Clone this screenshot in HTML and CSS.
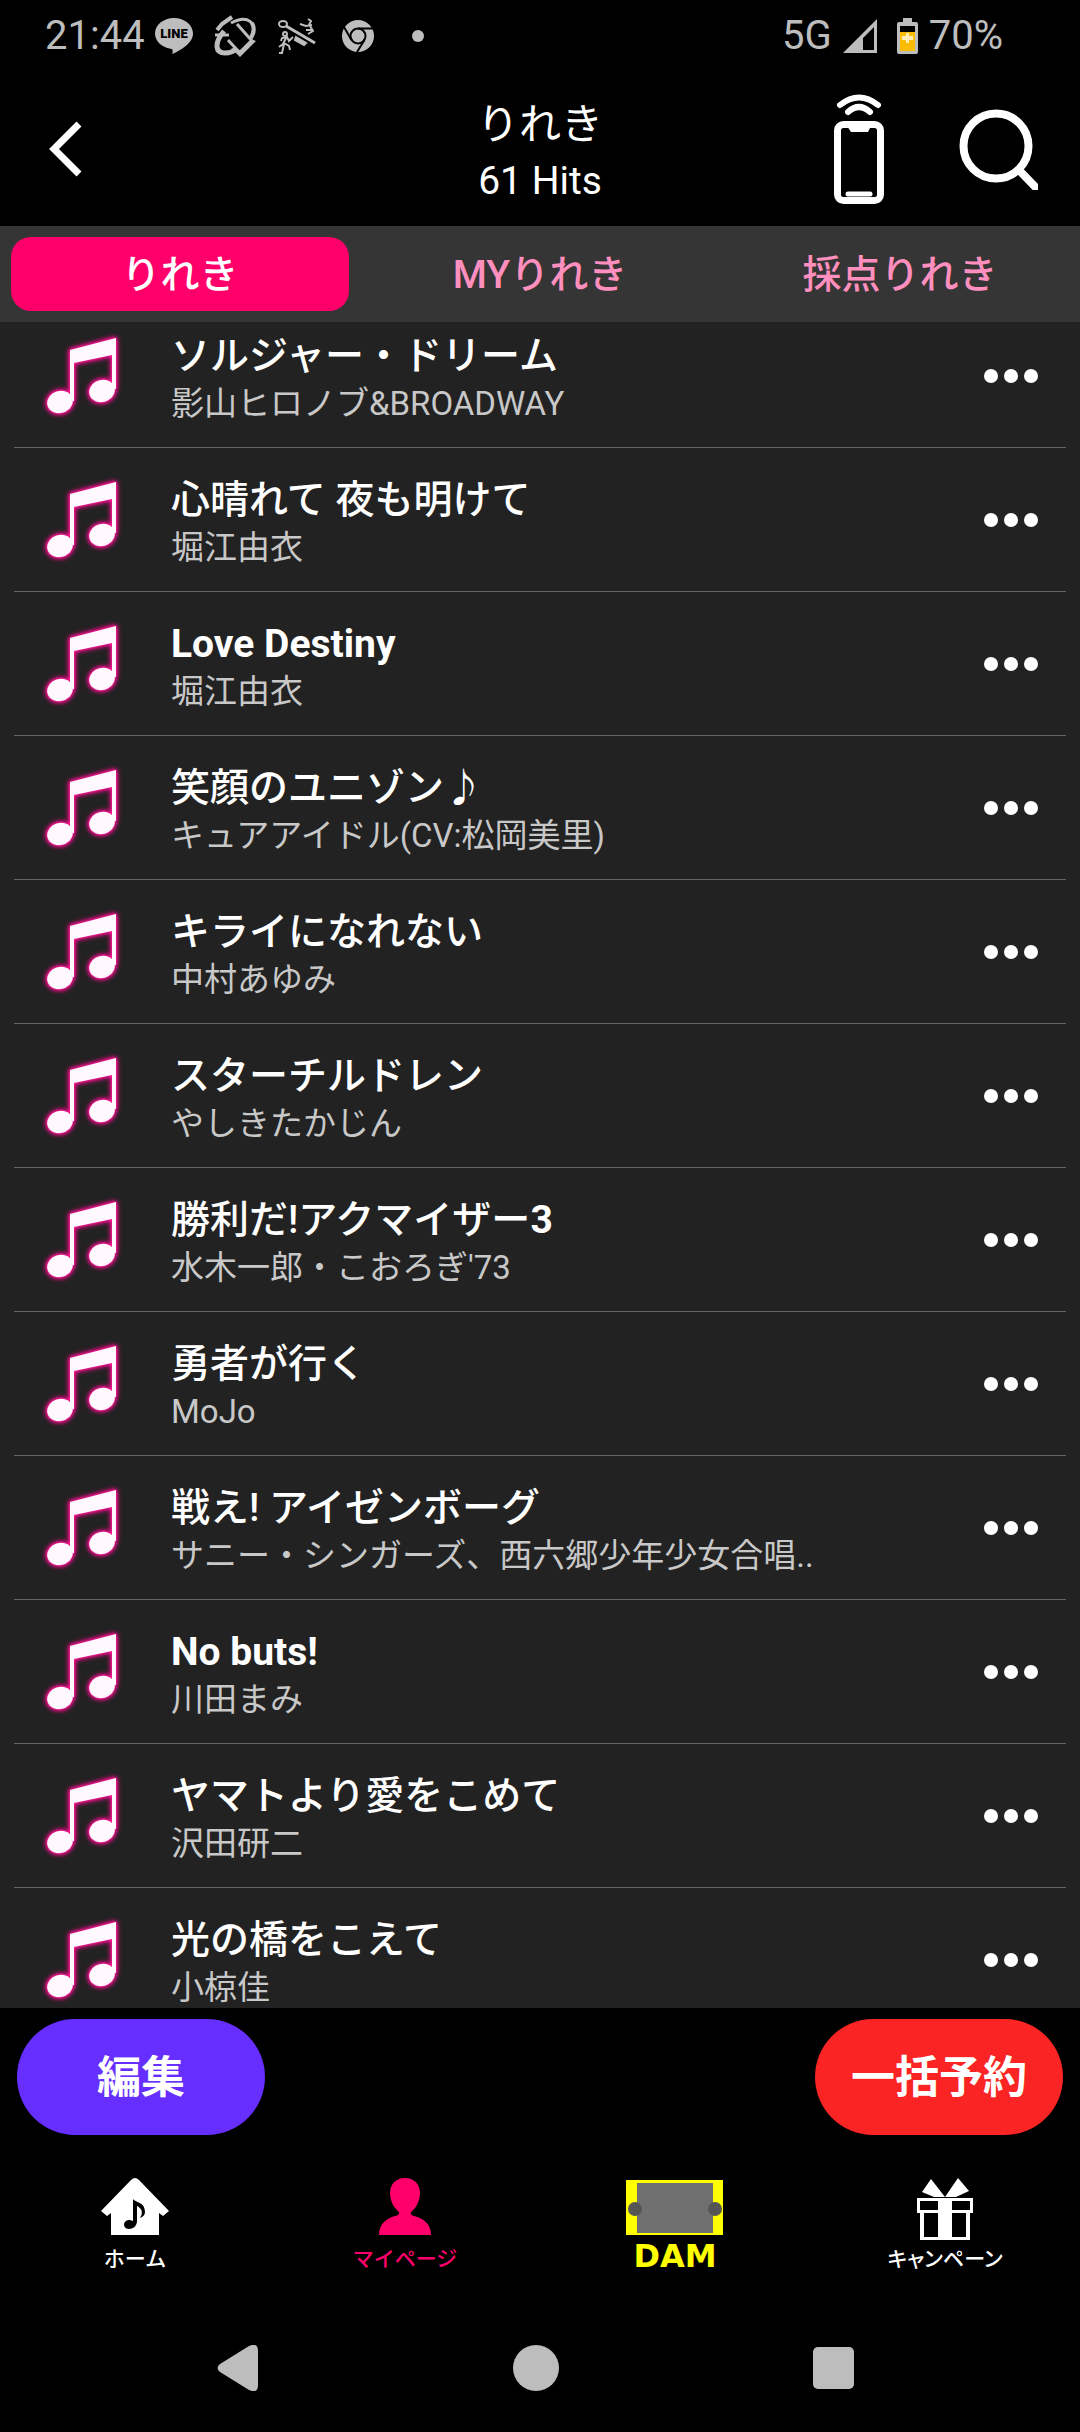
FILE: index.html
```html
<!DOCTYPE html>
<html lang="ja">
<head>
<meta charset="utf-8">
<meta name="viewport" content="width=device-width">
<title>りれき</title>
<link rel="stylesheet" href="styles.css">
</head>
<body>
<svg class="defs" aria-hidden="true">
  <defs>
    <symbol id="note" viewBox="0 0 90 90">
      <g fill="#fff8ff">
        <path d="M32 19 78 7V58H74V24L36 32V70H32Z"/>
        <ellipse cx="22" cy="71" rx="13" ry="11" transform="rotate(-18 22 71)"/>
        <ellipse cx="64" cy="60" rx="13" ry="11" transform="rotate(-18 64 60)"/>
      </g>
    </symbol>
    <symbol id="dots" viewBox="0 0 54 16">
      <g fill="#fff"><circle cx="7" cy="8" r="7"/><circle cx="27" cy="8" r="7"/><circle cx="47" cy="8" r="7"/></g>
    </symbol>
  </defs>
</svg>
<div class="app">
  <div class="status">
    <span class="clock">21:44</span>
    <svg class="st-line" viewBox="0 0 38 36" width="38" height="36"><path fill="#bdbdbd" d="M19 0C8.500 0 0 7 0 15.500 0 23 6.500 29.300 15.500 30.700 18 31.200 18 32 17.300 36 24 33 38 26 38 15.500 38 7 29.500 0 19 0Z"/><text x="19" y="20" text-anchor="middle" class="line-word">LINE</text></svg>
    <svg class="st-t" viewBox="0 0 42 42" width="42" height="42"><g fill="none" stroke="#bdbdbd"><path d="M3 15 8 9 18 2" stroke-width="4"/><path d="M17 8C34-1 44 8 37 22" stroke-width="3"/><path d="M38 8Q42 15 37 23" stroke-width="4"/><path d="M1 20H15" stroke-width="3"/><path d="M10 16C0 28 1 38 11 38 17 38 20 36 22 34" stroke-width="5"/><path d="M23 9 38 26 26 38 14 25" stroke-width="3"/></g><path fill="#bdbdbd" d="M42 26 26 42 17 33 26 35 37 24Z"/></svg>
    <svg class="st-run" viewBox="0 0 38 36" width="38" height="36"><g fill="none" stroke="#bdbdbd" stroke-width="2"><ellipse cx="5" cy="6" rx="4" ry="3"/><path stroke-width="3" d="M8 8 37 25"/><path fill="#bdbdbd" d="M18 19 28 25 26 27 17 22Z"/><circle cx="7" cy="16" r="2"/><path d="M3 23 4 20 9 19 11 23 15 19M8 20 5 26 1 29M6 26 4 35H1M6 25 11 28 12 32M22 6 28 8 34 7M30 1 33 3 31 7M32 8 35 13 30 16M28 12 34 12"/></g></svg>
    <svg class="st-chrome" viewBox="0 0 32 32" width="32" height="32"><circle cx="16" cy="16" r="16" fill="#bdbdbd"/><g fill="none" stroke="#000" stroke-width="2"><circle cx="16" cy="16" r="7.500"/><path d="M16 8.500H31M9.500 20 2 7M22.500 20 15 32"/></g></svg>
    <svg class="st-dot" viewBox="0 0 12 12" width="12" height="12"><circle cx="6" cy="6" r="6" fill="#bdbdbd"/></svg>
    <span class="net">5G</span>
    <svg class="st-signal" viewBox="0 0 34 34" width="34" height="34"><path fill="#bdbdbd" fill-rule="evenodd" d="M34 0V34H0ZM31 8 20 19V31H31Z"/></svg>
    <svg class="st-batt" viewBox="0 0 21 36" width="21" height="36"><path fill="#bdbdbd" d="M6 0H15V4H19Q21 4 21 6V34Q21 36 19 36H2Q0 36 0 34V6Q0 4 2 4H6Z"/><path d="M3 8H18V15H3Z"/><path fill="#fbbc04" d="M3 14H18V33H3Z"/><path fill="#ffeeb8" d="M9 15H12V18H16V22H12V25H9V22H5V18H9Z"/></svg>
    <span>70%</span>
  </div>

  <header class="header">
    <button class="icon-btn back" aria-label="戻る"><svg viewBox="0 0 34 56" width="34" height="56"><path d="M30 3 5 28 30 53" fill="none" stroke="#fff" stroke-width="7"/></svg></button>
    <div class="heading">
      <h1>りれき</h1>
      <p>61 Hits</p>
    </div>
    <div class="actions">
      <button class="icon-btn" aria-label="リモコン"><svg viewBox="0 0 50 110" width="50" height="110"><g fill="none" stroke="#fff" stroke-linecap="round"><rect x="3.500" y="30.500" width="43" height="76" rx="6" stroke-width="7"/><path d="M6 11Q25-4 44 11" stroke-width="6"/><path d="M14 18Q25 8 36 18" stroke-width="6"/><path d="M14 100H36" stroke-width="5"/></g><path fill="#fff" d="M13 32H37L34 38H17Z"/></svg></button>
      <button class="icon-btn" aria-label="検索"><svg viewBox="0 0 79 81" width="79" height="81"><g fill="none" stroke="#fff" stroke-width="8"><circle cx="37" cy="37" r="32.500"/><path d="M59 60 84 86"/></g></svg></button>
    </div>
  </header>

  <nav class="tabs">
    <button class="tab active">りれき</button>
    <button class="tab">MYりれき</button>
    <button class="tab">採点りれき</button>
  </nav>

  <main class="list-view">
    <ul class="songs">
      <li class="song"><svg class="note"><use href="#note"/></svg><div class="info"><h2>ソルジャー・ドリーム</h2><p>影山ヒロノブ&amp;BROADWAY</p></div><button class="icon-btn more" aria-label="メニュー"><svg><use href="#dots"/></svg></button></li>
      <li class="song"><svg class="note"><use href="#note"/></svg><div class="info"><h2>心晴れて 夜も明けて</h2><p>堀江由衣</p></div><button class="icon-btn more" aria-label="メニュー"><svg><use href="#dots"/></svg></button></li>
      <li class="song"><svg class="note"><use href="#note"/></svg><div class="info"><h2 class="latin">Love Destiny</h2><p>堀江由衣</p></div><button class="icon-btn more" aria-label="メニュー"><svg><use href="#dots"/></svg></button></li>
      <li class="song"><svg class="note"><use href="#note"/></svg><div class="info"><h2>笑顔のユニゾン♪</h2><p>キュアアイドル(CV:松岡美里)</p></div><button class="icon-btn more" aria-label="メニュー"><svg><use href="#dots"/></svg></button></li>
      <li class="song"><svg class="note"><use href="#note"/></svg><div class="info"><h2>キライになれない</h2><p>中村あゆみ</p></div><button class="icon-btn more" aria-label="メニュー"><svg><use href="#dots"/></svg></button></li>
      <li class="song"><svg class="note"><use href="#note"/></svg><div class="info"><h2>スターチルドレン</h2><p>やしきたかじん</p></div><button class="icon-btn more" aria-label="メニュー"><svg><use href="#dots"/></svg></button></li>
      <li class="song"><svg class="note"><use href="#note"/></svg><div class="info"><h2>勝利だ!アクマイザー<span class="latin">3</span></h2><p>水木一郎・こおろぎ'73</p></div><button class="icon-btn more" aria-label="メニュー"><svg><use href="#dots"/></svg></button></li>
      <li class="song"><svg class="note"><use href="#note"/></svg><div class="info"><h2>勇者が行く</h2><p>MoJo</p></div><button class="icon-btn more" aria-label="メニュー"><svg><use href="#dots"/></svg></button></li>
      <li class="song"><svg class="note"><use href="#note"/></svg><div class="info"><h2>戦え! アイゼンボーグ</h2><p>サニー・シンガーズ、西六郷少年少女合唱..</p></div><button class="icon-btn more" aria-label="メニュー"><svg><use href="#dots"/></svg></button></li>
      <li class="song"><svg class="note"><use href="#note"/></svg><div class="info"><h2 class="latin">No buts!</h2><p>川田まみ</p></div><button class="icon-btn more" aria-label="メニュー"><svg><use href="#dots"/></svg></button></li>
      <li class="song"><svg class="note"><use href="#note"/></svg><div class="info"><h2>ヤマトより愛をこめて</h2><p>沢田研二</p></div><button class="icon-btn more" aria-label="メニュー"><svg><use href="#dots"/></svg></button></li>
      <li class="song"><svg class="note"><use href="#note"/></svg><div class="info"><h2>光の橋をこえて</h2><p>小椋佳</p></div><button class="icon-btn more" aria-label="メニュー"><svg><use href="#dots"/></svg></button></li>
    </ul>
  </main>

  <div class="bulk">
    <button class="pill edit">編集</button>
    <button class="pill reserve">一括予約</button>
  </div>

  <nav class="bottom">
    <a href="#home"><svg viewBox="0 0 68 62" width="68" height="62"><path fill="#fff" d="M34 0Q36 0 38 2L68 33 62 38 58 35V57H10V35L6 38 0 33 30 2Q32 0 34 0Z"/><path d="M32 21C35 25 44 24 44 34 44 37 42 39 39 40 43 34 40 30 36 28V43C36 48 32 51 28 51 24 51 23 48 23 46 24 42 28 41 32 43Z"/></svg><span>ホーム</span></a>
    <a href="#mypage" class="current"><svg viewBox="0 0 52 62" width="52" height="62"><path fill="#ff006b" d="M26 0C36 0 41 7 41 15 41 22 38 29 32 34Q31 37 35 38C47 41 52 48 52 57H0C0 48 5 41 16 38Q21 37 20 34C14 29 11 22 11 15 11 7 16 0 26 0Z"/></svg><span>マイページ</span></a>
    <a href="#dam" class="dam"><svg viewBox="0 0 98 62" width="98" height="62"><path fill="#ff0" d="M0 2H97V57H0Z"/><path fill="#707070" d="M11 5H87V55H11Z"/><g fill="#555"><circle cx="9" cy="31" r="7"/><circle cx="89" cy="31" r="7"/></g></svg><span>DAM</span></a>
    <a href="#campaign" class="campaign"><svg viewBox="0 0 56 62" width="56" height="62"><g fill="#fff"><path d="M14 1 5 14 17 19H39L52 13 41 0 28 19Z"/><path fill-rule="evenodd" d="M0 20H56V35H53V62H3V35H0ZM3 23V32H21V23ZM35 23V32H53V23ZM7 35V59H21V35ZM35 35V59H49V35Z"/></g></svg><span>キャンペーン</span></a>
  </nav>

  <nav class="system">
    <button class="icon-btn" aria-label="戻る"><svg viewBox="0 0 42 46" width="42" height="46"><path fill="#bdbdbd" d="M32 1Q41-3 41 6V40Q41 49 32 45L3 27Q-2 23 3 19Z"/></svg></button>
    <button class="icon-btn" aria-label="ホーム"><svg viewBox="0 0 46 46" width="46" height="46"><circle cx="23" cy="23" r="23" fill="#bdbdbd"/></svg></button>
    <button class="icon-btn" aria-label="アプリ"><svg viewBox="0 0 42 42" width="42" height="42"><rect width="41" height="42" rx="5" fill="#bdbdbd"/></svg></button>
  </nav>
</div>
</body>
</html>
```
FILE: styles.css
```css
* { box-sizing: border-box; }
body {
  margin: 0;
  background: #000;
  color: #fff;
  font-family: Roboto, "Noto Sans CJK JP", sans-serif;
}
h1, h2, p, ul { margin: 0; padding: 0; font-weight: 400; }
ul { list-style: none; }
svg { display: block; flex: none; }
.defs { position: absolute; width: 0; height: 0; }
.app { display: flex; flex-direction: column; min-height: 100vh; }
.icon-btn { display: block; padding: 0; border: 0; background: none; color: inherit; }

.status {
  display: flex;
  align-items: center;
  height: 72px;
  padding: 0 77px 0 45px;
  font-size: 40px;
  line-height: 72px;
  color: #bdbdbd;
}
.st-line { margin-left: 10px; }
.line-word { font: 900 13px Roboto, sans-serif; fill: #000; }
.st-t { margin-left: 21px; }
.st-run { margin-left: 22px; }
.st-chrome { margin-left: 26px; }
.st-dot { margin-left: 38px; }
.net { margin-left: auto; }
.st-signal { margin: 0 20px 0 11px; }
.st-batt { margin-right: 11px; }

.header {
  display: grid;
  grid-template-columns: 1fr auto 1fr;
  align-items: center;
  height: 154px;
  padding: 0 42px;
}
.back { margin-left: 7px; }
.heading { padding-top: 4px; text-align: center; }
.heading h1 { font-size: 42px; line-height: 60px; }
.heading p { font-size: 39px; line-height: 52px; }
.actions { display: flex; align-items: center; justify-content: flex-end; gap: 75px; }

.tabs {
  display: grid;
  grid-template-columns: repeat(3, 1fr);
  gap: 22px;
  height: 96px;
  padding: 11px;
  background: #353535;
}
.tab {
  padding: 2px 0 0;
  border: 0;
  border-radius: 20px;
  background: none;
  color: #ff8fbe;
  font: 500 39px/72px Roboto, "Noto Sans CJK JP", sans-serif;
}
.tab.active { background: #ff006b; color: #fff; }

.list-view {
  display: flex;
  flex-direction: column;
  justify-content: flex-end;
  flex: 1;
  background: #222;
  overflow: hidden;
}
.songs { margin: -18px 14px -24px; }
.song {
  display: flex;
  align-items: center;
  height: 144px;
  padding: 0 28px 0 24px;
  border-bottom: 1px solid #666;
}
.note { width: 90px; height: 90px; filter: drop-shadow(0 0 1px #ff1a94) drop-shadow(0 0 2px #ff1a94) drop-shadow(0 0 2px #e00080); }
.info { flex: 1; min-width: 0; padding: 9px 0 0 43px; white-space: nowrap; }
.info h2 { font-size: 39px; line-height: 48px; font-weight: 500; }
.info .latin { font-weight: 700; }
.info p { font-size: 33px; line-height: 48px; color: #c8c8c8; }
.more svg { width: 54px; height: 16px; }

.bulk {
  display: flex;
  justify-content: space-between;
  height: 138px;
  padding: 11px 17px;
}
.pill {
  width: 248px;
  height: 116px;
  padding: 2px 0 0;
  border: 0;
  border-radius: 58px;
  color: #fff;
  font: 700 44px/114px Roboto, "Noto Sans CJK JP", sans-serif;
}
.edit { background: #662eff; }
.reserve { background: #fa2424; }

.bottom {
  display: grid;
  grid-template-columns: repeat(4, 1fr);
  height: 158px;
  padding-top: 32px;
}
.bottom a {
  display: flex;
  flex-direction: column;
  align-items: center;
  color: #fff;
  font-size: 21px;
  line-height: 38px;
  font-weight: 500;
  text-decoration: none;
}
.bottom .current { color: #ff006b; }
.bottom .campaign { font-feature-settings: "palt"; }
.bottom .dam { color: #ff0; font: 700 32px/32px "DejaVu Sans", sans-serif; }

.system {
  display: flex;
  align-items: center;
  justify-content: space-between;
  height: 128px;
  padding: 0 225px 0 217px;
}
```
